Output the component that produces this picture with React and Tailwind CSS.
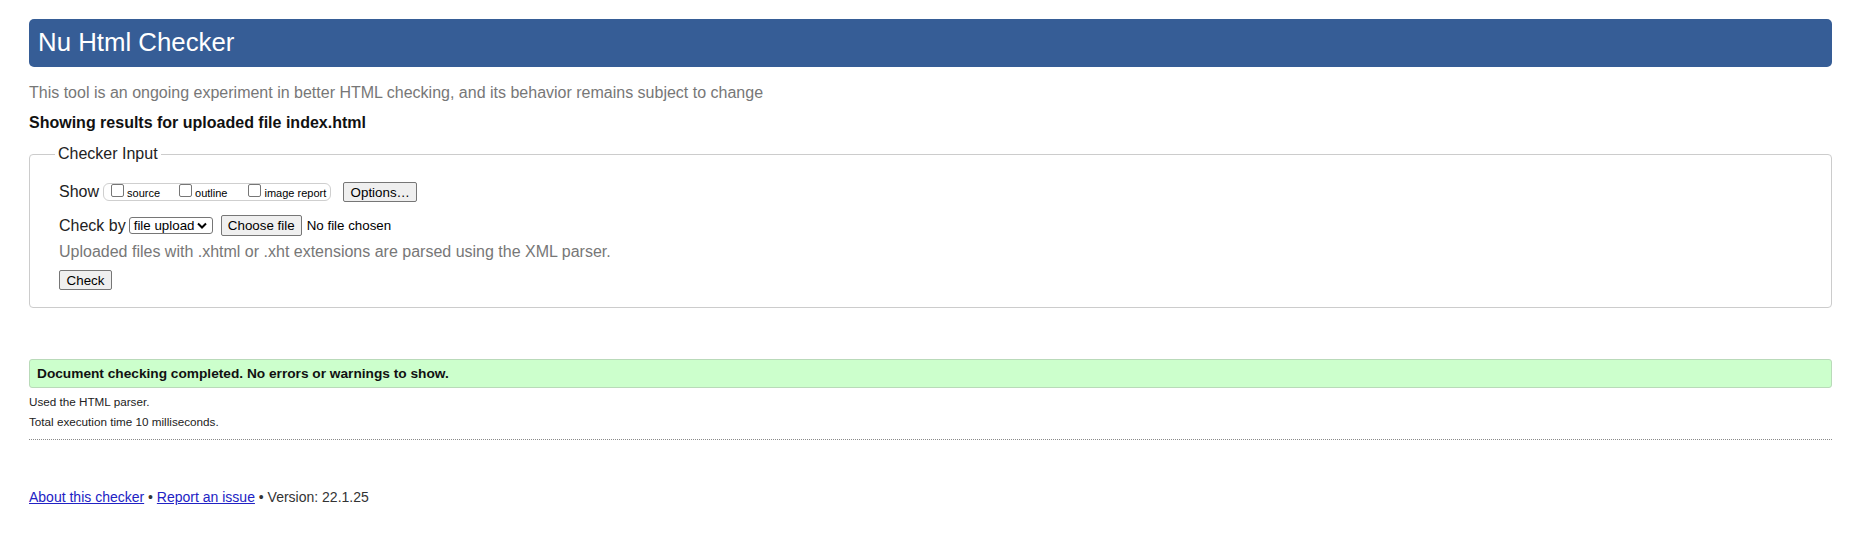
import React from "react";

function Box() {
  return (
    <span className="inline-block w-[13px] h-[13px] border border-[#767676] rounded-[2px] bg-white mb-[4px] shrink-0" />
  );
}

function Btn({ children, className = "" }) {
  return (
    <button
      type="button"
      className={
        "flex items-center justify-center border border-[#767676] bg-[#efefef] rounded-[2px] px-[6px] text-[13.33px] text-black leading-[15px] " +
        className
      }
    >
      {children}
    </button>
  );
}

export default function App() {
  return (
    <div className="min-h-[543px] bg-white pl-[29px] pr-[20px] pt-[19px] text-black font-['Liberation_Sans',Arial,sans-serif]">
      <header className="h-[48px] rounded-[5px] bg-[#365d96] flex items-center pl-[9px] pb-[3px]">
        <h1 className="text-white text-[25.8px] leading-[30px] font-normal">Nu Html Checker</h1>
      </header>

      <p className="mt-[17px] text-[16px] leading-[18px] text-[#777777]">
        This tool is an ongoing experiment in better HTML checking, and its behavior remains subject to change
      </p>

      <p className="mt-[12px] text-[16px] leading-[18px] font-bold text-[#111]">
        Showing results for uploaded file index.html
      </p>

      <fieldset className="mt-[13px] border border-[#cccccc] rounded-[4px] pl-[25px] pr-[20px] pb-[17px]">
        <legend className="px-[3px] text-[16px] leading-[18px] text-[#222]">Checker Input</legend>
        <div className="ml-[4px]">
          <div className="mt-[19px] h-[20px] flex items-center">
            <span className="text-[16px] leading-[18px] text-[#222]">Show</span>
            <span className="ml-[4px] h-[18px] flex items-center border border-[#cfcfcf] rounded-[6px] pl-[7px] pr-[4px]">
              <span className="flex items-center">
                <Box />
                <span className="ml-[3px] text-[11px] leading-[13px] mt-[2px]">source</span>
              </span>
              <span className="flex items-center ml-[19px]">
                <Box />
                <span className="ml-[3px] text-[11px] leading-[13px] mt-[2px]">outline</span>
              </span>
              <span className="flex items-center ml-[21px]">
                <Box />
                <span className="ml-[3px] text-[11px] leading-[13px] mt-[2px]">image report</span>
              </span>
            </span>
            <Btn className="ml-[12px] h-[20px] w-[74px]">Options…</Btn>
          </div>

          <div className="mt-[13px] h-[21px] flex items-center">
            <span className="text-[16px] leading-[18px] text-[#222]">Check by</span>
            <span className="ml-[3px] h-[17px] w-[84px] flex items-center justify-between border border-[#767676] rounded-[3px] bg-white pl-[4px] pr-[5px] text-[13.33px] leading-[15px]">
              <span>file upload</span>
              <svg width="10" height="7" viewBox="0 0 10 7" aria-hidden="true">
                <polyline points="1,1.5 5,5.5 9,1.5" fill="none" stroke="#000" strokeWidth="2" />
              </svg>
            </span>
            <Btn className="ml-[8px] h-[21px] w-[81px]">Choose file</Btn>
            <span className="ml-[5px] text-[13.33px] leading-[15px]">No file chosen</span>
          </div>

          <p className="mt-[7px] text-[16px] leading-[18px] text-[#777777]">
            Uploaded files with .xhtml or .xht extensions are parsed using the XML parser.
          </p>

          <Btn className="mt-[9px] h-[20px] w-[53px]">Check</Btn>
        </div>
      </fieldset>

      <div className="mt-[51px] h-[29px] flex items-center border border-[#b9dab9] rounded-[3px] bg-[#ccffcc] pl-[7px]">
        <span className="text-[13.7px] leading-[16px] font-bold text-[#111]">
          Document checking completed. No errors or warnings to show.
        </span>
      </div>

      <div className="border-b border-dotted border-[#8a8a8a] pb-[10px]">
        <p className="mt-[7px] text-[11.7px] leading-[14px] text-[#222]">Used the HTML parser.</p>
        <p className="mt-[6px] text-[11.7px] leading-[14px] text-[#222]">Total execution time 10 milliseconds.</p>
      </div>

      <p className="mt-[49px] text-[14px] leading-[16px] text-[#333]">
        <a href="#" className="underline text-[#2222c4]">About this checker</a>
        {" • "}
        <a href="#" className="underline text-[#2222c4]">Report an issue</a>
        {" • Version: 22.1.25"}
      </p>
    </div>
  );
}
